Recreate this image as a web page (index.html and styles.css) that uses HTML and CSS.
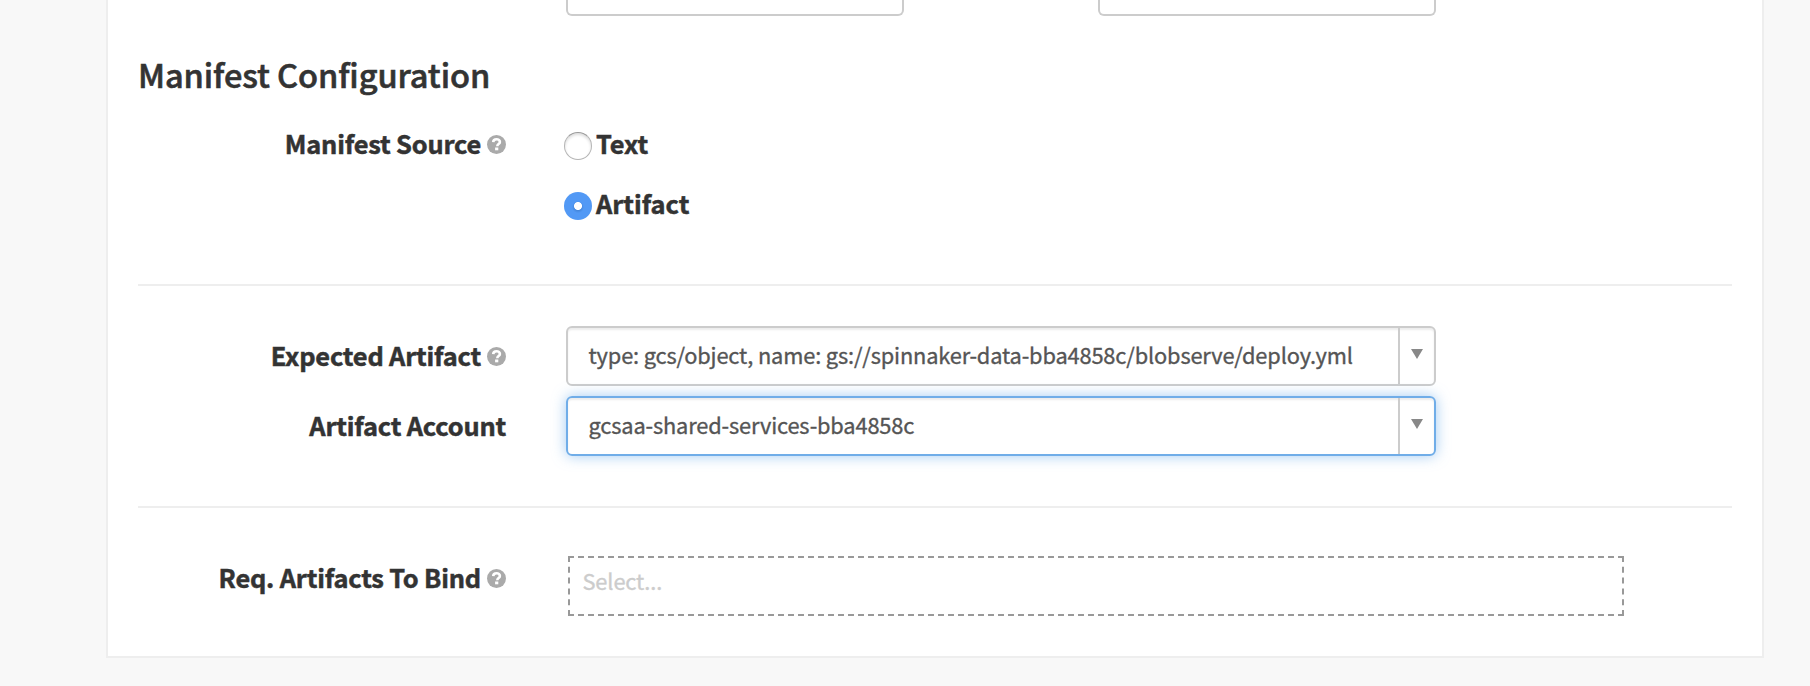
FILE: index.html
```html
<!DOCTYPE html>
<html lang="en">
<head>
<meta charset="utf-8">
<title>Manifest Configuration</title>
<link rel="stylesheet" href="styles.css">
</head>
<body>
<main class="panel">
  <div class="inputs"><div class="input"></div><div class="input"></div></div>
  <h4 class="heading">Manifest Configuration</h4>
  <div class="row source">
    <div class="label"><span>Manifest Source</span><svg class="help" viewBox="0 0 19 19"><circle cx="9.5" cy="9.5" r="9.5"/><path d="M6.2 7.1C6.3 5.1 7.6 4.2 9.5 4.2c2 0 3.4 1 3.4 2.7 0 2.2-2.6 2.2-2.6 4.3"/><rect x="8.1" y="12.5" width="3.2" height="2.8"/></svg></div>
    <div class="radios">
      <label class="radio"><i class="dot"></i><span>Text</span></label>
      <label class="radio"><i class="dot checked"></i><span>Artifact</span></label>
    </div>
  </div>
  <hr class="rule">
  <div class="row artifact">
    <div class="label"><span>Expected Artifact</span><svg class="help" viewBox="0 0 19 19"><circle cx="9.5" cy="9.5" r="9.5"/><path d="M6.2 7.1C6.3 5.1 7.6 4.2 9.5 4.2c2 0 3.4 1 3.4 2.7 0 2.2-2.6 2.2-2.6 4.3"/><rect x="8.1" y="12.5" width="3.2" height="2.8"/></svg></div>
    <div class="select"><span class="value">type: gcs/object, name: gs://spinnaker-data-bba4858c/blobserve/deploy.yml</span><span class="toggle"><svg class="arrow" viewBox="0 0 12 10"><path d="M0 0h12L6 10z"/></svg></span></div>
  </div>
  <div class="row account">
    <div class="label"><span>Artifact Account</span></div>
    <div class="select focused"><span class="value">gcsaa-shared-services-bba4858c</span><span class="toggle"><svg class="arrow" viewBox="0 0 12 10"><path d="M0 0h12L6 10z"/></svg></span></div>
  </div>
  <hr class="rule second">
  <div class="row bind">
    <div class="label"><span>Req. Artifacts To Bind</span><svg class="help" viewBox="0 0 19 19"><circle cx="9.5" cy="9.5" r="9.5"/><path d="M6.2 7.1C6.3 5.1 7.6 4.2 9.5 4.2c2 0 3.4 1 3.4 2.7 0 2.2-2.6 2.2-2.6 4.3"/><rect x="8.1" y="12.5" width="3.2" height="2.8"/></svg></div>
    <div class="multi">Select...</div>
  </div>
</main>
</body>
</html>
```
FILE: styles.css
```css
* { box-sizing: border-box; }
body {
  margin: 0;
  height: 686px;
  overflow: hidden;
  background: #f8f8f8;
  color: #333;
  font-family: "Noto Sans CJK SC", "Open Sans", sans-serif;
}
.panel {
  width: 1658px;
  height: 658px;
  margin-left: 106px;
  padding: 0 30px;
  border: 2px solid #eee;
  border-top: 0;
  background: #fff;
}
.inputs { display: flex; gap: 194px; padding-left: 428px; }
.input {
  width: 338px;
  height: 16px;
  border: 2px solid #ccc;
  border-top: 0;
  border-radius: 0 0 6px 6px;
}
.heading {
  margin: 38px 0 0 0;
  height: 40px;
  line-height: 40px;
  font-size: 32.6px;
  font-weight: 500;
  letter-spacing: -.1px;
  -webkit-text-stroke: .6px #333;
}
.row { display: grid; grid-template-columns: 368px 1fr; column-gap: 60px; }
.label {
  display: flex;
  justify-content: flex-end;
  align-items: center;
  gap: 6px;
  height: 40px;
  font-size: 25.4px;
  font-weight: 700;
  line-height: 40px;
  letter-spacing: -.19px;
  white-space: nowrap;
  -webkit-text-stroke: .5px #333;
}
.label span, .radio span { padding-bottom: 2px; }
.help { width: 19px; height: 19px; fill: #aaa; }
.help path { fill: none; stroke: #fff; stroke-width: 2.6; }
.help rect { fill: #fff; }
.source { margin-top: 30px; height: 160px; }
.radios { display: grid; grid-template-rows: 40px 40px; row-gap: 20px; margin-left: -2px; }
.radio {
  display: flex;
  align-items: center;
  gap: 4px;
  font-size: 25.4px;
  font-weight: 700;
  line-height: 40px;
  -webkit-text-stroke: .5px #333;
}
.dot {
  width: 28px;
  height: 28px;
  margin-top: 4px;
  border-radius: 50%;
  background: #fff;
  border: 1px solid #b5b5b5;
  border-top-color: #999;
  box-shadow: inset 0 2px 3px #ddd;
}
.dot.checked {
  border: 0;
  background: radial-gradient(circle at 50% 50%, #fff 3.6px, transparent 4.4px), radial-gradient(circle at 50% 54%, #4384d8 3px, #5299f5 6px);
  box-shadow: none;
}
.rule { margin: 0; height: 2px; border: 0; background: #eee; }
.artifact { margin-top: 40px; height: 60px; }
.artifact .label, .account .label { height: 60px; }
.account { margin-top: 10px; height: 60px; }
.select {
  display: flex;
  width: 870px;
  height: 60px;
  border: 2px solid #ccc;
  border-radius: 6px;
  box-shadow: inset 0 2px 2px rgba(0, 0, 0, .075);
}
.focused {
  border-color: #70ade8;
  box-shadow: inset 0 2px 2px rgba(0, 0, 0, .075), 0 0 14px rgba(102, 168, 233, .6);
}
.value {
  flex: 1;
  padding-left: 20.5px;
  color: #555;
  font-size: 21.8px;
  line-height: 54px;
  letter-spacing: -.15px;
  white-space: nowrap;
  -webkit-text-stroke: .35px #555;
}
.toggle { width: 36px; border-left: 2px solid #ccc; padding: 21px 0 0 11px; }
.arrow { display: block; width: 12px; height: 10px; fill: #888; }
.second { margin-top: 50px; }
.bind { margin-top: 48px; }
.bind .label { margin-top: 2px; }
.multi {
  width: 1056px;
  height: 60px;
  margin-left: 2px;
  padding-left: 12.5px;
  border: 2px dashed #999;
  color: #ccc;
  font-size: 21.8px;
  line-height: 46px;
  letter-spacing: -.12px;
  -webkit-text-stroke: .35px #ccc;
}
```
